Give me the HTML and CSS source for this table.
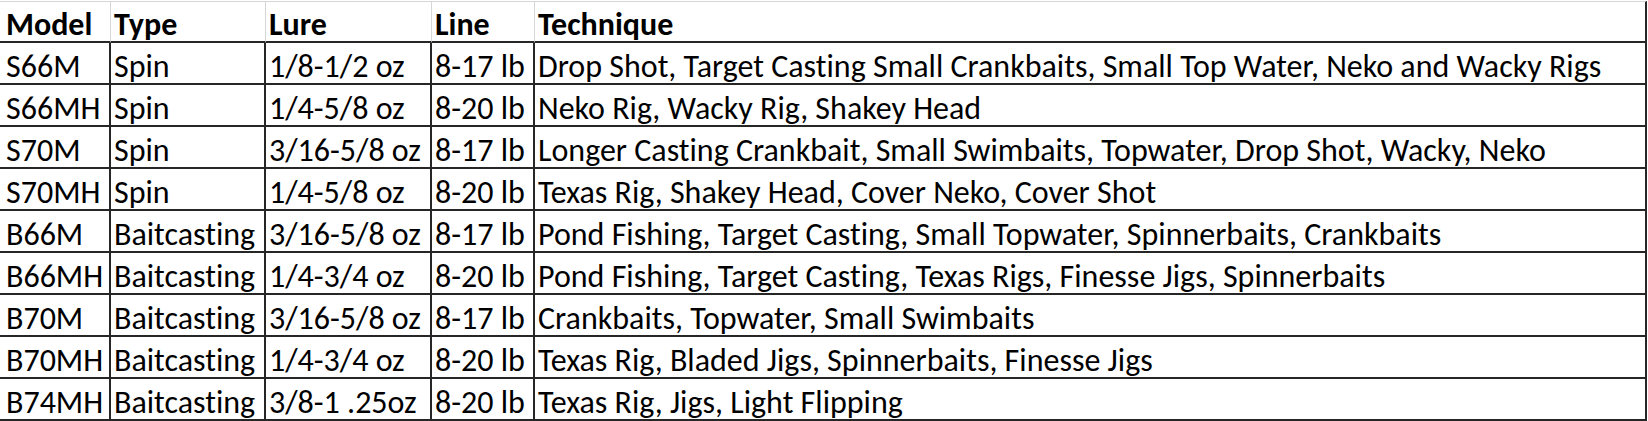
FILE: index.html
```html
<!DOCTYPE html>
<html>
<head>
<meta charset="utf-8">
<title>Rod Models</title>
<link rel="stylesheet" href="styles.css">
</head>
<body>
<table class="sheet">
  <thead>
    <tr class="head">
      <th>Model</th><th>Type</th><th>Lure</th><th>Line</th><th>Technique</th>
    </tr>
  </thead>
  <tbody>
    <tr><td>S66M</td><td>Spin</td><td>1/8-1/2 oz</td><td>8-17 lb</td><td>Drop Shot, Target Casting Small Crankbaits, Small Top Water, Neko and Wacky Rigs</td></tr>
    <tr><td>S66MH</td><td>Spin</td><td>1/4-5/8 oz</td><td>8-20 lb</td><td>Neko Rig, Wacky Rig, Shakey Head</td></tr>
    <tr><td>S70M</td><td>Spin</td><td>3/16-5/8 oz</td><td>8-17 lb</td><td>Longer Casting Crankbait, Small Swimbaits, Topwater, Drop Shot, Wacky, Neko</td></tr>
    <tr><td>S70MH</td><td>Spin</td><td>1/4-5/8 oz</td><td>8-20 lb</td><td>Texas Rig, Shakey Head, Cover Neko, Cover Shot</td></tr>
    <tr><td>B66M</td><td>Baitcasting</td><td>3/16-5/8 oz</td><td>8-17 lb</td><td>Pond Fishing, Target Casting, Small Topwater, Spinnerbaits, Crankbaits</td></tr>
    <tr><td>B66MH</td><td>Baitcasting</td><td>1/4-3/4 oz</td><td>8-20 lb</td><td>Pond Fishing, Target Casting, Texas Rigs, Finesse Jigs, Spinnerbaits</td></tr>
    <tr><td>B70M</td><td>Baitcasting</td><td>3/16-5/8 oz</td><td>8-17 lb</td><td>Crankbaits, Topwater, Small Swimbaits</td></tr>
    <tr><td>B70MH</td><td>Baitcasting</td><td>1/4-3/4 oz</td><td>8-20 lb</td><td>Texas Rig, Bladed Jigs, Spinnerbaits, Finesse Jigs</td></tr>
    <tr><td>B74MH</td><td>Baitcasting</td><td>3/8-1 .25oz</td><td>8-20 lb</td><td>Texas Rig, Jigs, Light Flipping</td></tr>
  </tbody>
</table>
</body>
</html>
```

FILE: styles.css
```css
html, body {
  margin: 0;
  padding: 0;
  background: #ffffff;
}

body {
  padding-top: 1px;
}

.sheet {
  display: grid;
  grid-template-columns: 111px 155px 166px 103px 1112px;
  grid-auto-rows: 42px;
  border-spacing: 0;
  font-family: "Carlito", "Calibri", "Liberation Sans", sans-serif;
  font-size: 32px;
  line-height: 32px;
  font-variant-ligatures: none;
  color: #000;
}

.sheet thead,
.sheet tbody,
.sheet tr {
  display: contents;
}

.sheet th,
.sheet td {
  display: flex;
  align-items: flex-end;
  box-sizing: border-box;
  padding: 0 2px 0 3px;
  text-align: left;
  white-space: nowrap;
  border-right: 2px solid #262626;
  border-bottom: 2px solid #262626;
}

.sheet th {
  font-weight: bold;
  border-top: 1px solid #d6d6d6;
  border-right: 1px solid #d6d6d6;
}

.sheet th:last-child {
  border-right: 2px solid #262626;
}

.sheet th:first-child,
.sheet td:first-child {
  padding-left: 6px;
}
```
